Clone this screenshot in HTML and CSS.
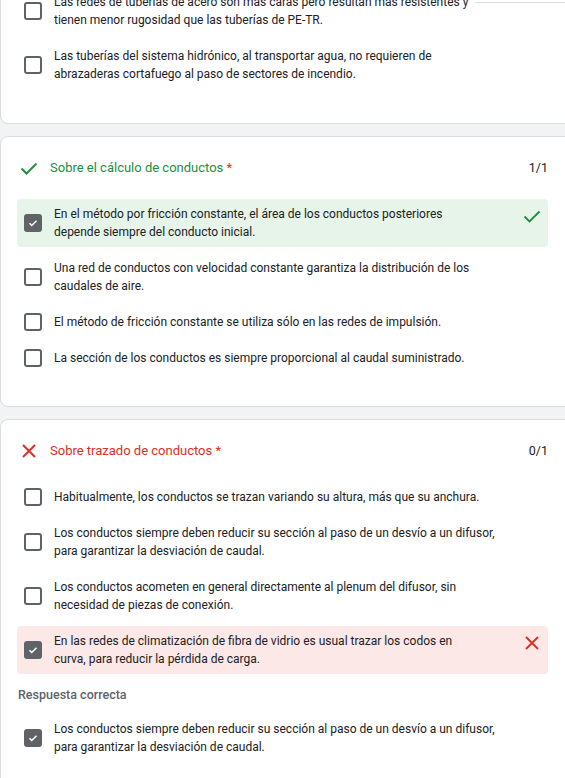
FILE: index.html
```html
<!DOCTYPE html>
<html lang="es">
<head>
<meta charset="utf-8">
<link rel="stylesheet" href="styles.css">
</head>
<body>
<div class="topline"></div>
<div class="page">
  <section class="card card-first">
    <div class="options">
      <div class="opt">
        <span class="box"></span>
        <span class="txt">Las redes de tuberías de acero son más caras pero resultan más resistentes y tienen menor rugosidad que las tuberías de PE-TR.</span>
      </div>
      <div class="opt">
        <span class="box"></span>
        <span class="txt">Las tuberías del sistema hidrónico, al transportar agua, no requieren de abrazaderas cortafuego al paso de sectores de incendio.</span>
      </div>
    </div>
  </section>

  <section class="card">
    <div class="qhead">
      <svg class="qicon" viewBox="0 0 24 24" width="24" height="24"><path d="M4.5 12.5l5 5L19.5 7.5" fill="none" stroke="#1e8e3e" stroke-width="2"/></svg>
      <span class="qtitle ok">Sobre el cálculo de conductos <span class="req">*</span></span>
      <span class="score">1/1</span>
    </div>
    <div class="options">
      <div class="opt correct">
        <span class="box checked"><svg viewBox="0 0 16 16" width="16" height="16"><path d="M4 8.3l2.6 2.6L12 5.5" fill="none" stroke="#fff" stroke-width="1.7"/></svg></span>
        <span class="txt">En el método por fricción constante, el área de los conductos posteriores depende siempre del conducto inicial.</span>
        <svg class="mark" viewBox="0 0 24 24" width="24" height="24"><path d="M4.5 12.5l5 5L19.5 7.5" fill="none" stroke="#1e8e3e" stroke-width="1.8"/></svg>
      </div>
      <div class="opt">
        <span class="box"></span>
        <span class="txt">Una red de conductos con velocidad constante garantiza la distribución de los caudales de aire.</span>
      </div>
      <div class="opt">
        <span class="box"></span>
        <span class="txt">El método de fricción constante se utiliza sólo en las redes de impulsión.</span>
      </div>
      <div class="opt">
        <span class="box"></span>
        <span class="txt">La sección de los conductos es siempre proporcional al caudal suministrado.</span>
      </div>
    </div>
  </section>

  <section class="card">
    <div class="qhead">
      <svg class="qicon" viewBox="0 0 24 24" width="24" height="24"><path d="M6 6L18 18M18 6L6 18" fill="none" stroke="#d93025" stroke-width="2"/></svg>
      <span class="qtitle bad">Sobre trazado de conductos <span class="req">*</span></span>
      <span class="score">0/1</span>
    </div>
    <div class="options">
      <div class="opt">
        <span class="box"></span>
        <span class="txt">Habitualmente, los conductos se trazan variando su altura, más que su anchura.</span>
      </div>
      <div class="opt">
        <span class="box"></span>
        <span class="txt">Los conductos siempre deben reducir su sección al paso de un desvío a un difusor, para garantizar la desviación de caudal.</span>
      </div>
      <div class="opt">
        <span class="box"></span>
        <span class="txt">Los conductos acometen en general directamente al plenum del difusor, sin necesidad de piezas de conexión.</span>
      </div>
      <div class="opt wrong">
        <span class="box checked"><svg viewBox="0 0 16 16" width="16" height="16"><path d="M4 8.3l2.6 2.6L12 5.5" fill="none" stroke="#fff" stroke-width="1.7"/></svg></span>
        <span class="txt">En las redes de climatización de fibra de vidrio es usual trazar los codos en curva, para reducir la pérdida de carga.</span>
        <svg class="mark" viewBox="0 0 24 24" width="24" height="24"><path d="M6 6L18 18M18 6L6 18" fill="none" stroke="#d93025" stroke-width="1.8"/></svg>
      </div>
    </div>
    <div class="answer-label">Respuesta correcta</div>
    <div class="options">
      <div class="opt">
        <span class="box checked"><svg viewBox="0 0 16 16" width="16" height="16"><path d="M4 8.3l2.6 2.6L12 5.5" fill="none" stroke="#fff" stroke-width="1.7"/></svg></span>
        <span class="txt">Los conductos siempre deben reducir su sección al paso de un desvío a un difusor, para garantizar la desviación de caudal.</span>
      </div>
    </div>
  </section>
</div>
</body>
</html>
```

FILE: styles.css
```css
html, body {
  margin: 0;
  padding: 0;
  background: #f1f3f4;
  overflow: hidden;
}
body {
  font-family: Roboto, "Liberation Sans", Arial, sans-serif;
  color: #202124;
  font-size: 12px;
  line-height: 18px;
  width: 565px;
  height: 778px;
  position: relative;
}
.topline {
  position: absolute;
  top: 2px;
  left: 475px;
  right: 0;
  height: 1px;
  background: #dadce0;
  z-index: 2;
}
.page {
  display: flex;
  flex-direction: column;
  gap: 12px;
}
.card {
  background: #fff;
  border: 1px solid #dadce0;
  border-radius: 8px;
  margin-right: -10px;
  padding: 20px 26px 33px 16px;
}
.card-first {
  margin-top: -14px;
  padding-top: 0;
  padding-bottom: 34px;
}
.qhead {
  display: flex;
  align-items: center;
  height: 22px;
  margin-bottom: 20px;
}
.qicon {
  flex: none;
  margin-right: 9px;
}
.qtitle {
  font-size: 13px;
  flex: 1;
}
.qtitle.ok { color: #1e8e3e; }
.qtitle.bad { color: #d93025; }
.req { color: #d93025; }
.score {
  font-size: 12.5px;
  color: #202124;
}
.options {
  display: flex;
  flex-direction: column;
  gap: 6px;
}
.opt {
  display: flex;
  align-items: center;
  padding: 6px 4px 6px 7px;
  border-radius: 4px;
}
.opt.correct { background: #e6f4ea; }
.opt.wrong { background: #fce8e6; }
.box {
  flex: none;
  width: 14px;
  height: 14px;
  border: 2px solid #5f6368;
  border-radius: 3px;
  margin-right: 12px;
  box-sizing: content-box;
  display: flex;
  align-items: center;
  justify-content: center;
}
.box.checked {
  background: #5f6368;
}
.box.checked svg {
  width: 14px;
  height: 14px;
}
.txt {
  flex: none;
  width: 445.5px;
}
.opt.correct .txt,
.opt.wrong .txt {
  width: 428px;
}
.mark {
  flex: none;
  margin-left: auto;
  align-self: flex-start;
  margin-top: -1px;
}
.answer-label {
  font-size: 12.5px;
  font-weight: 500;
  color: #5f6368;
  margin: 12px 0 10px 1px;
}
```
